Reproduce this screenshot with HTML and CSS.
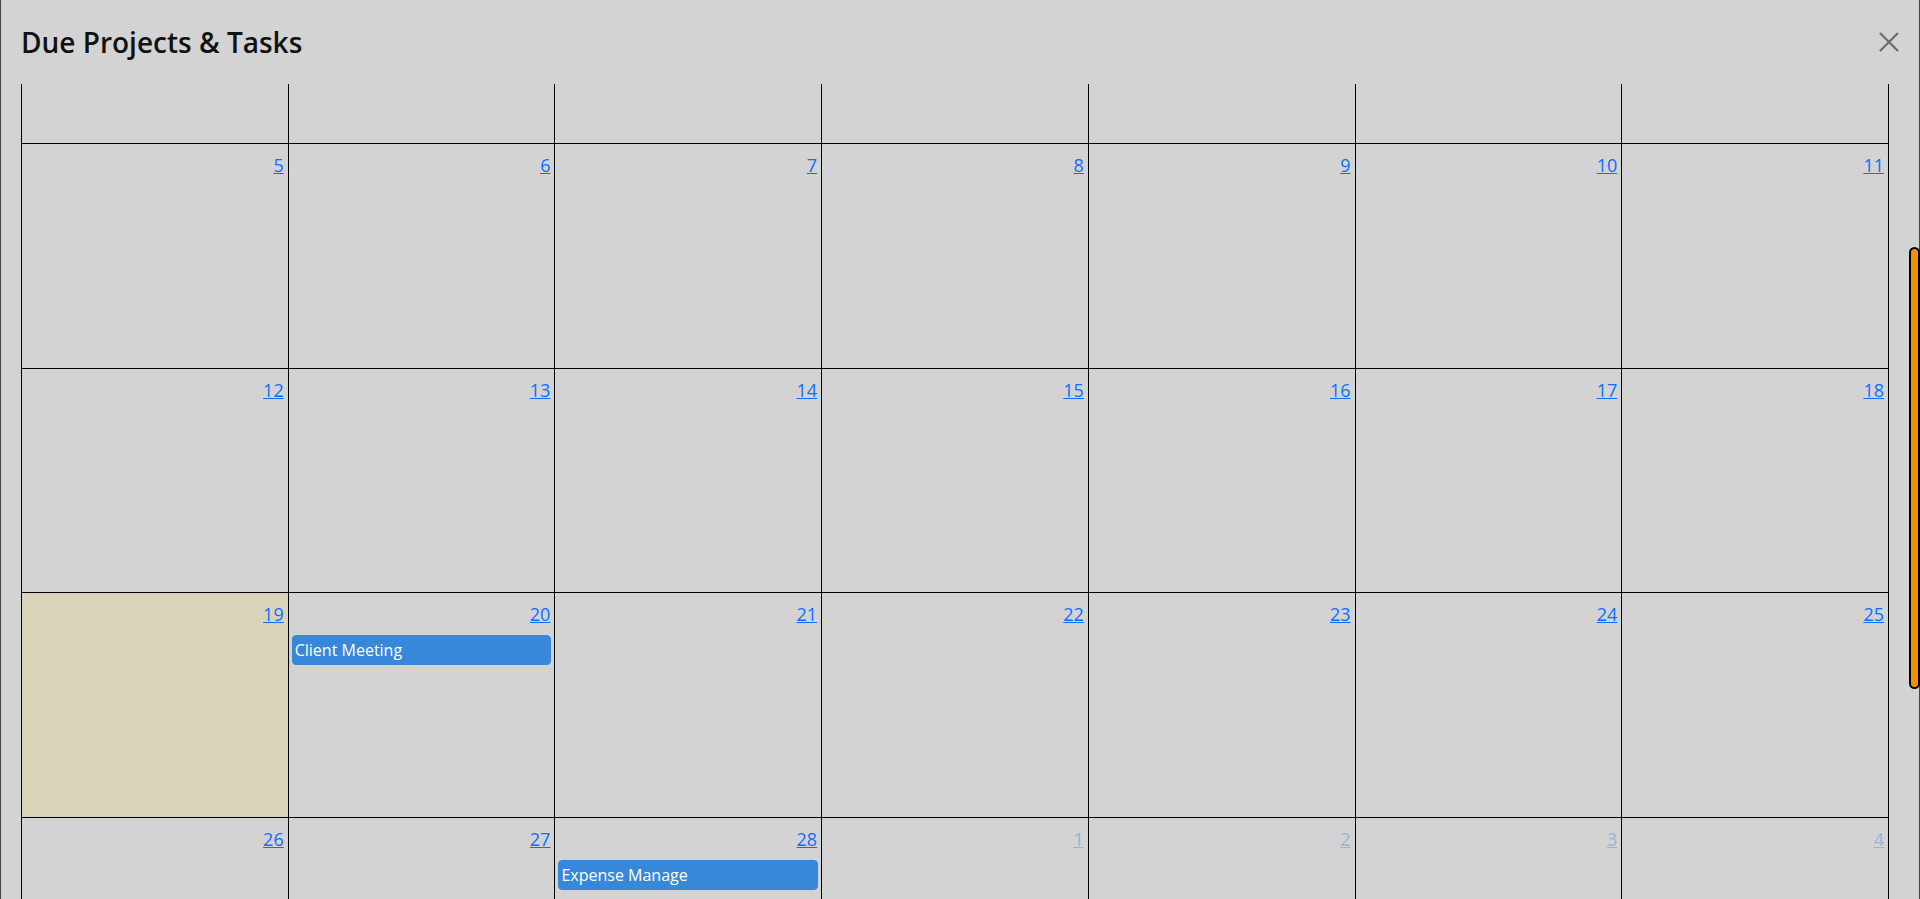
FILE: index.html
```html
<!DOCTYPE html>
<html lang="en">
<head>
<meta charset="utf-8">
<title>Due Projects &amp; Tasks</title>
<link rel="stylesheet" href="styles.css">
</head>
<body>
<div class="modal">
  <div class="modal-header">
    <h5 class="modal-title">Due Projects &amp; Tasks</h5>
    <button class="btn-close" aria-label="Close">
      <svg width="20" height="20" viewBox="0 0 20 20"><path d="M1 1 L19 19 M19 1 L1 19" stroke="#6b6b6b" stroke-width="2.2" fill="none"/></svg>
    </button>
  </div>
  <div class="modal-body">
    <div class="grid">
      <div class="week partial">
        <div class="day"></div>
        <div class="day"></div>
        <div class="day"></div>
        <div class="day"></div>
        <div class="day"></div>
        <div class="day"></div>
        <div class="day"></div>
      </div>
      <div class="week">
        <div class="day"><a class="num">5</a></div>
        <div class="day"><a class="num">6</a></div>
        <div class="day"><a class="num">7</a></div>
        <div class="day"><a class="num">8</a></div>
        <div class="day"><a class="num">9</a></div>
        <div class="day"><a class="num">10</a></div>
        <div class="day"><a class="num">11</a></div>
      </div>
      <div class="week">
        <div class="day"><a class="num">12</a></div>
        <div class="day"><a class="num">13</a></div>
        <div class="day"><a class="num">14</a></div>
        <div class="day"><a class="num">15</a></div>
        <div class="day"><a class="num">16</a></div>
        <div class="day"><a class="num">17</a></div>
        <div class="day"><a class="num">18</a></div>
      </div>
      <div class="week">
        <div class="day today"><a class="num">19</a></div>
        <div class="day"><a class="num">20</a><div class="event">Client Meeting</div></div>
        <div class="day"><a class="num">21</a></div>
        <div class="day"><a class="num">22</a></div>
        <div class="day"><a class="num">23</a></div>
        <div class="day"><a class="num">24</a></div>
        <div class="day"><a class="num">25</a></div>
      </div>
      <div class="week">
        <div class="day"><a class="num">26</a></div>
        <div class="day"><a class="num">27</a></div>
        <div class="day"><a class="num">28</a><div class="event">Expense Manage</div></div>
        <div class="day other"><a class="num">1</a></div>
        <div class="day other"><a class="num">2</a></div>
        <div class="day other"><a class="num">3</a></div>
        <div class="day other"><a class="num">4</a></div>
      </div>
    </div>
  </div>
  <div class="scroll-thumb"></div>
</div>
</body>
</html>
```

FILE: styles.css
```css
html, body {
  margin: 0;
  padding: 0;
  height: 100%;
}
body {
  font-family: "Segoe UI", "Open Sans", "Noto Sans", sans-serif;
  color: #111;
  background: #d3d3d3;
  overflow: hidden;
}
.modal {
  position: relative;
  height: 100vh;
  box-sizing: border-box;
  border-left: 1px solid #444;
  border-right: 1px solid #444;
  background: #d3d3d3;
  display: flex;
  flex-direction: column;
}
.modal-header {
  height: 84px;
  flex: none;
  box-sizing: border-box;
  padding: 25px 20px 25px 20px;
  display: flex;
  align-items: center;
  justify-content: space-between;
}
.modal-title {
  margin: 0;
  font-size: 28px;
  line-height: 34px;
  font-weight: 600;
  color: #111;
}
.btn-close {
  border: 0;
  background: transparent;
  padding: 0;
  width: 20px;
  height: 20px;
  display: flex;
}
.modal-body {
  flex: 1;
  min-height: 0;
  overflow: hidden;
  padding: 0 30px 0 20px;
}
.scroll-thumb {
  position: absolute;
  top: 247px;
  right: -1px;
  width: 11px;
  height: 442px;
  box-sizing: border-box;
  background: #f39200;
  border: 2px solid #000;
  border-radius: 6px;
}
.grid {
  border-left: 1px solid #000;
}
.week {
  display: grid;
  grid-template-columns: repeat(7, 1fr);
}
.day {
  height: 224.67px;
  box-sizing: border-box;
  border-right: 1px solid #000;
  border-bottom: 1px solid #000;
  display: flex;
  flex-direction: column;
  align-items: flex-end;
  min-width: 0;
}
.week.partial .day {
  height: 60px;
}
.day.today {
  background: rgba(255, 220, 40, 0.15);
}
.num {
  font-size: 18px;
  line-height: 27px;
  padding: 8px 4px 0 4px;
  color: #0d6efd;
  text-decoration: underline;
  cursor: pointer;
}
.day.other .num {
  opacity: 0.3;
}
.event {
  align-self: stretch;
  margin: 7px 3px 0 3px;
  padding: 0 2px;
  height: 30px;
  box-sizing: border-box;
  line-height: 28px;
  border: 1px solid #3788d8;
  border-radius: 4px;
  background: #3788d8;
  color: #fff;
  font-size: 16px;
  white-space: nowrap;
  overflow: hidden;
}
```
